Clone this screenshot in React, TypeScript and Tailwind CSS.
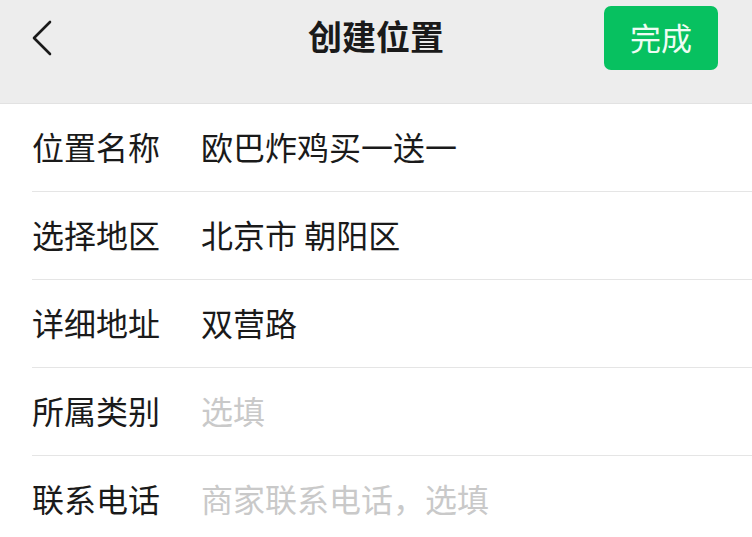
export default function App() {
  const rows = [
    { label: "位置名称", value: "欧巴炸鸡买一送一", placeholder: false },
    { label: "选择地区", value: "北京市 朝阳区", placeholder: false },
    { label: "详细地址", value: "双营路", placeholder: false },
    { label: "所属类别", value: "选填", placeholder: true },
    { label: "联系电话", value: "商家联系电话，选填", placeholder: true },
  ];

  return (
    <div
      className="w-[752px] h-[537px] overflow-hidden bg-white"
      style={{ fontFamily: '"Noto Sans CJK SC", "Noto Sans", sans-serif' }}
    >
      {/* Header */}
      <div className="h-[104px] bg-[#ededed] border-b border-[#e2e2e2]">
        <div className="relative h-[76px] flex items-center justify-center pb-[4px]">
          <button className="absolute left-[30px] top-[20px] w-[26px] h-[36px] flex items-center">
            <svg width="24" height="36" viewBox="0 0 24 36" fill="none">
              <path d="M20 2 L4 18 L20 34" stroke="#1a1a1a" strokeWidth="2.6" strokeLinecap="round" strokeLinejoin="round" />
            </svg>
          </button>
          <h1 className="text-[34px] font-bold text-[#1a1a1a] leading-none">创建位置</h1>
          <button className="absolute right-[34px] top-[6px] w-[114px] h-[64px] rounded-[7px] bg-[#07c160] text-[#eefcf3] text-[31px] leading-none flex items-center justify-center pb-[4px]">
            完成
          </button>
        </div>
      </div>

      {/* Form */}
      <div className="pl-[32px]">
        {rows.map((r) => (
          <div key={r.label} className="h-[88px] flex items-center pb-[4px] border-b border-[#e5e5e5]">
            <div className="w-[169px] text-[32px] leading-none text-[#1a1a1a]">{r.label}</div>
            <div className={"text-[32px] leading-none " + (r.placeholder ? "text-[#c9c9c9]" : "text-[#1a1a1a]")}>
              {r.value}
            </div>
          </div>
        ))}
      </div>
    </div>
  );
}
